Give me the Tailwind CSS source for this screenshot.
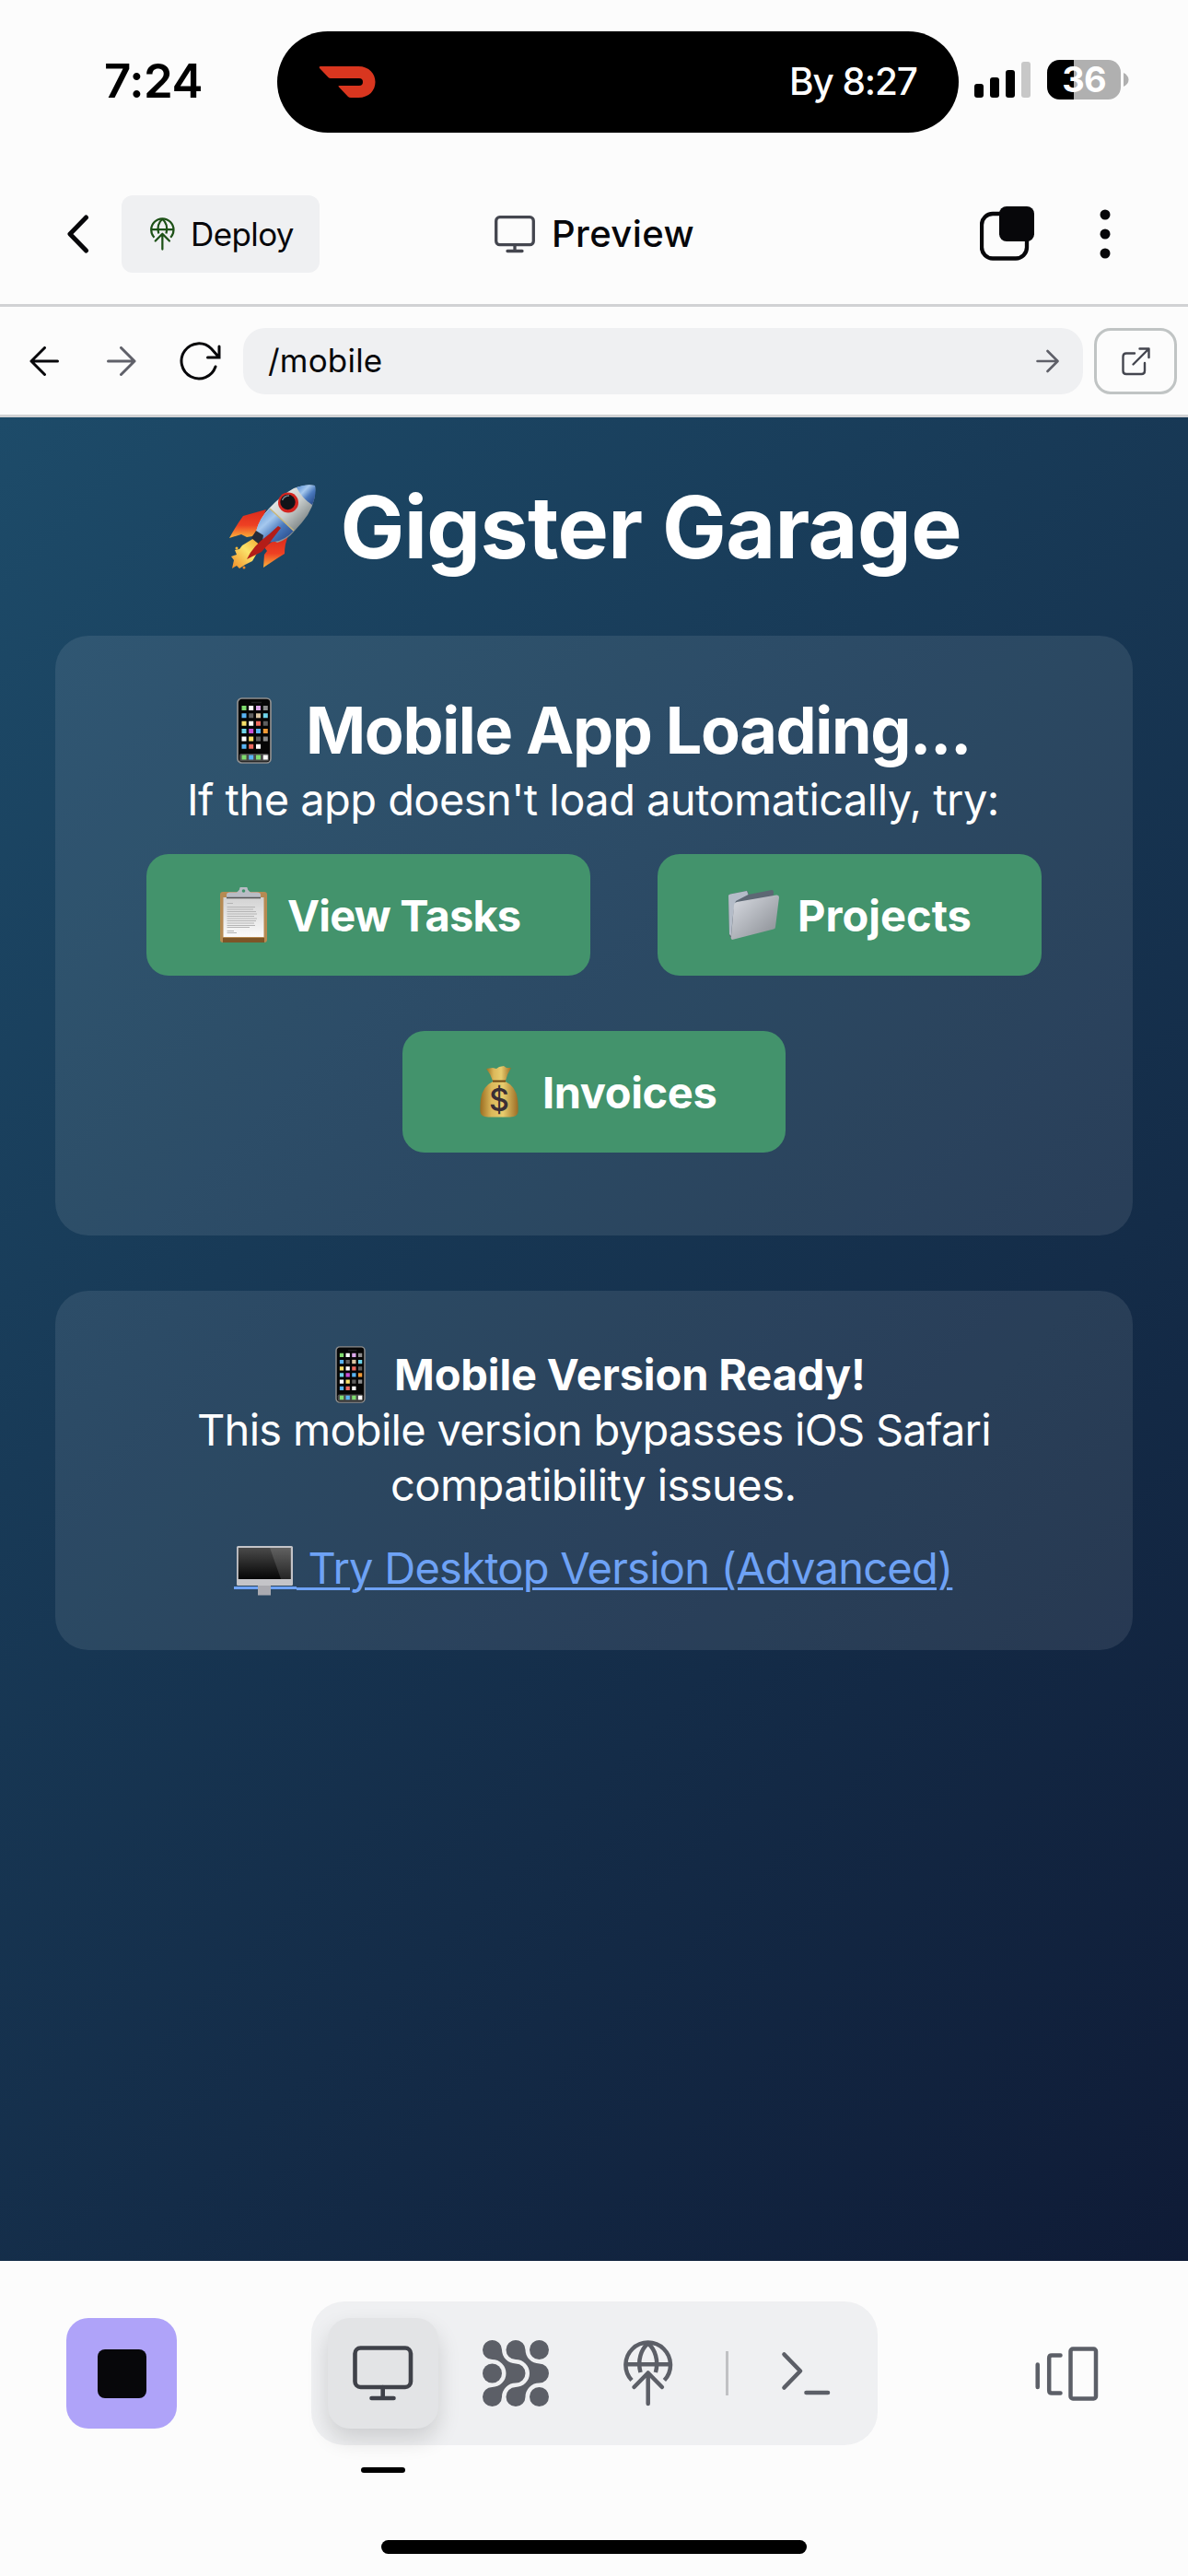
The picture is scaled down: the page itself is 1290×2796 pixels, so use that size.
<!DOCTYPE html>
<html lang="en">
<head>
<meta charset="utf-8">
<title>Preview</title>
<script src="https://cdn.jsdelivr.net/npm/@tailwindcss/browser@4"></script>
</head>
<body class="w-[1290px] h-[2796px] overflow-hidden bg-[#fcfcfc] font-['Inter',sans-serif] text-black">
<svg width="0" height="0" class="absolute">
  <defs>
    <linearGradient id="hull" x1="0" y1="0" x2="1" y2="1"><stop offset="0.2" stop-color="#eef0f0"/><stop offset=".5" stop-color="#c9cecd"/><stop offset=".8" stop-color="#6f7778"/></linearGradient>
    <linearGradient id="blue" x1="0" y1="0" x2="1" y2="1"><stop offset="0" stop-color="#4d86cf"/><stop offset=".35" stop-color="#a5c8ee"/><stop offset=".6" stop-color="#4a79bd"/><stop offset="1" stop-color="#1f3f7d"/></linearGradient>
    <linearGradient id="fin" x1="0" y1="0" x2="0" y2="1"><stop offset="0" stop-color="#d9291c"/><stop offset=".55" stop-color="#ee4023"/><stop offset="1" stop-color="#f9b43a"/></linearGradient>
    <linearGradient id="flame" x1="1" y1="0" x2="0" y2="1"><stop offset="0" stop-color="#f0a32a"/><stop offset=".45" stop-color="#fbe36a"/><stop offset="1" stop-color="#f08a26"/></linearGradient>
    <linearGradient id="paper" x1="0" y1="0" x2="0" y2="1"><stop offset="0" stop-color="#d2d2d2"/><stop offset="1" stop-color="#fbfbfb"/></linearGradient>
    <linearGradient id="folder" x1="0" y1="0" x2="1" y2="1"><stop offset="0" stop-color="#dadde4"/><stop offset="1" stop-color="#868a90"/></linearGradient>
    <linearGradient id="bag" x1="0" y1="0" x2="1" y2="0"><stop offset="0" stop-color="#9a6d22"/><stop offset=".3" stop-color="#dcb85a"/><stop offset=".6" stop-color="#e8cd6e"/><stop offset="1" stop-color="#9b6c24"/></linearGradient>
    <linearGradient id="screen" x1="0" y1="0" x2="0" y2="1"><stop offset="0" stop-color="#4a4a4a"/><stop offset="1" stop-color="#050505"/></linearGradient>
    <symbol id="globe-up" viewBox="0 0 54 72">
      <g fill="none" stroke="currentColor" stroke-width="4.5">
        <path d="M9 43.5A24.3 24.3 0 1 1 44.400 43.500"/>
        <path d="M3 26.300H51M26.700 3.500C19 10 15 22 18.500 35M26.700 3.500C34.400 10 38.400 22 34.900 35"/>
        <path d="M26.700 35.500V69M11.500 51L26.700 35.500L41.900 51" stroke-linecap="round" stroke-linejoin="round"/>
      </g>
    </symbol>
    <symbol id="phone" viewBox="0 0 38 72">
      <rect x="1" y="1" width="36" height="70" rx="4.500" fill="#060606" stroke="#8f8f8f" stroke-width="1.700"/>
      <rect x="3" y="61" width="32" height="8.500" rx="2" fill="#4b4b4b"/>
      <path d="M16 5.500H27" stroke="#222" stroke-width="1.500"/>
      <path fill="#7fdc6e" d="M5.500 9h5v5h-5zM5.500 62.500h5v5h-5zM21 62.500h5v5h-5z"/>
      <path fill="#fff" d="M13.200 9h5v5h-5zM13.200 25.700h5v5h-5zM5.500 42.400h5v5h-5zM21 50.700h5v5h-5zM28.800 62.500h5v5h-5z"/>
      <path fill="#dda9ec" d="M21 9h5v5h-5z"/>
      <path fill="#8c8c8c" d="M28.800 9h5v5h-5zM28.800 42.400h5v5h-5z"/>
      <path fill="#58b4f5" d="M5.500 17.300h5v5h-5zM21 34h5v5h-5zM5.500 50.700h5v5h-5zM13.200 62.500h5v5h-5z"/>
      <path fill="#5f5f5f" d="M13.200 17.300h5v5h-5zM28.800 25.700h5v5h-5zM21 42.400h5v5h-5z"/>
      <path fill="#dcc7a4" d="M21 17.300h5v5h-5z"/>
      <path fill="#6fd5ea" d="M28.800 17.300h5v5h-5zM5.500 34h5v5h-5z"/>
      <path fill="#f8e069" d="M5.500 25.700h5v5h-5zM13.200 42.400h5v5h-5z"/>
      <path fill="#ee6a5f" d="M21 25.700h5v5h-5zM13.200 50.700h5v5h-5z"/>
      <path fill="#c951d8" d="M13.200 34h5v5h-5z"/>
      <path fill="#f29a35" d="M28.800 34h5v5h-5z"/>
    </symbol>
  </defs>
</svg>

<!-- Status bar -->
<div class="flex h-[110px] mt-[34px] items-center">
  <div class="w-[301px] pl-[113px] text-[51px] leading-[60px] tracking-[-0.5px] font-semibold -mt-[2px] whitespace-nowrap">7:24</div>
  <div class="w-[740px] h-[110px] rounded-full bg-black flex items-center pl-[45px]">
    <svg width="62" height="34" viewBox="0 0 62 34"><path d="M2 0H43C55 0 61.500 8 61.500 17S55 34 43 34H35Q33 34 32 33L22 22.500Q20.500 21 22.500 21H44Q48 21 48 17T44 13H13Q11.500 13 10.500 12L1 2Q0 0 2 0Z" fill="#d9361f"/></svg>
    <div class="ml-[449px] text-[40.5px] leading-[60px] tracking-[-1.1px] font-medium text-white whitespace-nowrap">By 8:27</div>
  </div>
  <svg class="ml-[17px] -mt-[4px]" width="61" height="44" viewBox="0 0 61 44">
    <rect x="0" y="26" width="10" height="15" rx="3"/><rect x="17" y="19" width="10" height="22" rx="3"/><rect x="34" y="11" width="10" height="30" rx="3"/><rect x="51" y="2" width="10" height="39" rx="3" fill="#c8c8c8"/>
  </svg>
  <div class="ml-[18px] -mt-[5px] w-[80px] h-[43px] rounded-[13.5px] bg-[linear-gradient(90deg,#000_29px,#b0b0b0_29px)] text-white text-[38px] leading-[43px] font-bold tracking-[-0.8px] text-center">36</div>
  <svg class="ml-[3px] -mt-[5px]" width="6" height="15" viewBox="0 0 6 15"><path d="M0 0Q5.500 3 5.500 7.500T0 15Z" fill="#b0b0b0"/></svg>
</div>

<!-- App header -->
<div class="mt-[34px] h-[155px] border-b-[3px] border-[#d1d2d4] flex items-center">
  <svg class="ml-[70px]" width="28" height="44" viewBox="0 0 28 44"><path d="M23.500 4L6 22L23.500 40" fill="none" stroke="#07070a" stroke-width="5" stroke-linecap="round" stroke-linejoin="round"/></svg>
  <div class="ml-[34px] w-[215px] h-[84px] rounded-xl bg-[#eff0f2] flex items-center pl-[31px]">
    <svg class="text-[#1d5117]" width="27" height="36"><use href="#globe-up"/></svg>
    <div class="ml-[17px] text-[35px] leading-[48px] tracking-[-0.6px] text-[#07070a] whitespace-nowrap">Deploy</div>
  </div>
  <svg class="ml-[190px]" width="44" height="41" viewBox="0 0 44 41" fill="none" stroke="#44464f" stroke-width="3.300" stroke-linecap="round"><rect x="1.700" y="1.700" width="40.600" height="30" rx="4"/><path d="M22 32V38M14 38.500H30"/></svg>
  <div class="ml-[18px] w-[159px] text-[40px] leading-[52px] tracking-[0.4px] font-medium text-[#07070a] whitespace-nowrap">Preview</div>
  <svg class="ml-[306px]" width="61" height="60" viewBox="0 0 61 60"><rect x="2" y="8" width="49" height="48.500" rx="12" fill="none" stroke="#07070a" stroke-width="4.300"/><rect x="21" y="0" width="38" height="38" rx="8" fill="#07070a"/></svg>
  <svg class="ml-[69px]" width="12" height="54" viewBox="0 0 12 54" fill="#07070a"><circle cx="6" cy="6" r="5.500"/><circle cx="6" cy="27" r="5.500"/><circle cx="6" cy="48" r="5.500"/></svg>
</div>

<!-- Address bar -->
<div class="h-[120px] border-b-[3px] border-[#d1d2d4] flex items-center pt-px">
  <svg class="ml-[32px]" width="32" height="32" viewBox="0 0 32 32" fill="none" stroke="#07070a" stroke-width="3" stroke-linecap="round" stroke-linejoin="round"><path d="M30.500 16H2M16.500 1.500L2 16L16.500 30.500"/></svg>
  <svg class="ml-[52px]" width="32" height="32" viewBox="0 0 32 32" fill="none" stroke="#5f6069" stroke-width="3" stroke-linecap="round" stroke-linejoin="round"><path d="M1.500 16H30M15.500 1.500L30 16L15.500 30.500"/></svg>
  <svg class="ml-[47px]" width="45" height="42" viewBox="0 0 45 42" fill="none" stroke="#07070a" stroke-width="3" stroke-linecap="round"><path d="M39 27A19 19 0 1 1 34.500 7.500L42.500 16.500M43 5V17H30.500"/></svg>
  <div class="ml-[24px] w-[912px] h-[72px] rounded-[24px] bg-[#eff0f2] flex items-center justify-between pl-[27px] pr-[26px]">
    <div class="-mt-[2px] text-[35px] leading-[48px] tracking-[0.2px] text-[#07070a] whitespace-nowrap">/mobile</div>
    <svg width="25" height="26" viewBox="0 0 25 26" fill="none" stroke="#5f6069" stroke-width="2.600" stroke-linecap="round" stroke-linejoin="round"><path d="M1.500 13H23M12.500 2L23.500 13L12.500 24"/></svg>
  </div>
  <div class="ml-[12px] w-[90px] h-[72px] rounded-[18px] border-[3px] border-[#c0c4c4] flex items-center justify-center">
    <svg width="31" height="31" viewBox="0 0 31 31" fill="none" stroke="#44464f" stroke-width="2.400" stroke-linecap="round" stroke-linejoin="round"><path d="M14 6.500H5Q1.500 6.500 1.500 10V25.500Q1.500 29 5 29H21.500Q25 29 25 25.500V17M19.500 1.500H29.500V11M29 2L12.500 18.500"/></svg>
  </div>
</div>

<!-- Previewed page -->
<main class="h-[2001px] bg-[linear-gradient(135deg,#1d4b69,#0f1b36)] px-[60px] pt-[59px] text-white">
  <h1 class="flex items-center justify-center h-[120px] text-[93px] leading-[120px] tracking-[-0.6px] font-bold whitespace-nowrap">
    <svg width="95" height="92" viewBox="0 0 95 92">
      <path d="M28 58L36 66L26 83L18 87L12 91L9 88L4 91L6 82L3 78L9 76L7 71L12 70L15 66Z" fill="url(#flame)"/>
      <circle cx="9" cy="69" r="1.500" fill="#f6b637"/><circle cx="17" cy="90" r="1.500" fill="#f08a26"/>
      <path d="M41 27L31 51L26 56L20 57L14 54L1 58Q8 45 16 34Z" fill="url(#fin)"/>
      <path d="M65 56Q61 64 61 75L53 80L38 90L39 76L42 72L39 68L50 60Z" fill="url(#fin)"/>
      <path d="M94 1Q96 22 80 41L72 50Q64 60 53 63L30 51Q34 36 44 26Q58 11 71 4Q84 -1 94 1Z" fill="url(#hull)"/>
      <path d="M45 26L71 50Q62 60 50 62L38 63L30 51Q33 37 45 26Z" fill="url(#blue)"/>
      <path d="M45 26L71 50" stroke="#c9b77a" stroke-width="1.500"/>
      <path d="M94 1Q96 11 91 22Q80 15 74 3Q84 -1 94 1Z" fill="url(#blue)"/>
      <path d="M30 50L38 55L36 67L25 58Z" fill="#252b38"/>
      <path d="M54 45L57 47L44 64L36 73L20 81Q26 67 44 54Z" fill="#b31d18"/>
      <circle cx="65" cy="19.500" r="11" fill="#d3241f"/><circle cx="64.500" cy="19" r="8.200" fill="#111318"/>
      <path d="M58.500 17Q60.500 12 66 12" stroke="#77808a" stroke-width="1.500" fill="none"/>
    </svg>
    <span class="ml-[27px] w-[673px]">Gigster Garage</span>
  </h1>

  <section class="mt-[58px] h-[651px] rounded-[36px] bg-white/9 pt-[61px]">
    <h2 class="flex items-center h-[84px] pl-[197px] text-[70px] leading-[84px] tracking-[-1.35px] font-bold whitespace-nowrap">
      <svg width="38" height="72"><use href="#phone"/></svg>
      <span class="ml-[37px]">Mobile App Loading...</span>
    </h2>
    <p class="mt-[3px] pl-[143px] h-[60px] text-[47px] leading-[60px] tracking-[-0.55px] whitespace-nowrap">If the app doesn't load automatically, try:</p>
    <div class="mt-[29px] flex flex-wrap justify-center gap-x-[73px] gap-y-[60px] text-[47px] leading-[60px] tracking-[-0.4px] font-bold whitespace-nowrap">
      <div class="w-[482px] h-[132px] rounded-[24px] bg-[#43936c] flex items-center pl-[79px]">
        <svg width="53" height="61" viewBox="0 0 53 61"><rect x="1" y="5" width="51" height="55" rx="3" fill="#b68a52"/><rect x="4" y="55" width="45" height="5" fill="#7d5527"/><rect x="4.500" y="11" width="44" height="43" fill="url(#paper)"/><g stroke="#b4b4b4" stroke-width="1"><path d="M8.500 17.500H15M8.500 21.500H39M8.500 24H37M8.500 26.500H40M8.500 29H41M8.500 31.500H38M8.500 34H41M8.500 36.500H40M8.500 39H38M8.500 41.500H39M8.500 43.500H33M8.500 47.500H16M8.500 49.500H19"/></g><path d="M8 11.500V8Q8 5.500 12 5.500H19Q21 4 22 2.500A4.500 4.500 0 0 1 31 2.500Q32 4 34 5.500H41Q45 5.500 45 8V11.500Z" fill="#b9bcc4"/><path d="M8 11.500H45" stroke="#555" stroke-width="1.500"/><circle cx="26.500" cy="4" r="1.800" fill="#43936c"/></svg>
        <span class="ml-[21px] mt-[2px] tracking-[-0.8px]">View Tasks</span>
      </div>
      <div class="w-[417px] h-[132px] rounded-[24px] bg-[#43936c] flex items-center pl-[77px]">
        <svg width="55" height="54" viewBox="0 0 55 54"><path d="M0 6Q0 5 2 4.500L20 1Q21 1 21.500 3V5L47 0Q49 0 49 3L44 40L4 53Q1 51 1 48Z" fill="#5d6874"/><path d="M0 6Q0 5 2 4.500L20 1L21.500 5L8 12Q5 20 3 50L1 48Z" fill="#b4bcc8"/><path d="M6 17Q6 14 9 13L52 5.500Q55 5 55 8L51 40Q51 42 49 42.500L4 54Q2 53 3 50Z" fill="url(#folder)"/></svg>
        <span class="ml-[20px] mt-[2px] tracking-[0px]">Projects</span>
      </div>
      <div class="w-[416px] h-[132px] rounded-[24px] bg-[#43936c] flex items-center pl-[84px]">
        <svg width="42" height="56" viewBox="0 0 42 56"><path d="M7 3L14 2L18 3L21 1L26 0L29 2L34 2Q30 8 28 16H14Q12 9 7 3Z" fill="url(#bag)"/><path d="M14 17H28Q39 22 41 36Q42 45 41.500 50Q41 55 33 55.500H9Q1 55 .5 50Q0 45 1 36Q3 22 14 17Z" fill="url(#bag)"/><path d="M14 16.500H28" stroke="#6d4816" stroke-width="2"/><text x="21" y="49" text-anchor="middle" font-size="34" font-weight="500" letter-spacing="0" fill="#3a2f35">$</text></svg>
        <span class="ml-[26px] mt-[2px]">Invoices</span>
      </div>
    </div>
  </section>

  <section class="mt-[60px] h-[390px] rounded-[36px] bg-white/9 pt-[61px] text-[47px] leading-[60px] whitespace-nowrap">
    <div class="flex items-center h-[60px] pl-[304px] font-bold tracking-[-0.15px]">
      <svg width="33" height="62"><use href="#phone"/></svg>
      <span class="ml-[31px]">Mobile Version Ready!</span>
    </div>
    <p class="pl-[154px] tracking-[-0.72px]">This mobile version bypasses iOS Safari</p>
    <p class="pl-[364px] tracking-[-0.55px]">compatibility issues.</p>
    <p class="mt-[30px] h-[60px] pl-[194px] tracking-[-0.75px]"><a class="underline decoration-[3px] underline-offset-[4px] text-[#6ea2f5]"><svg class="inline align-[-13px]" width="68" height="54" viewBox="0 0 68 54"><path d="M0 45.500H68" stroke="currentColor" stroke-width="3"/><path d="M26 42H40V53.500H26Z" fill="#aaaab0"/><rect x="3" width="61" height="43" rx="1.500" fill="#c4c4c8"/><rect x="4.800" y="2" width="57" height="34" fill="url(#screen)"/><path d="M39 2H61.800V36H51Z" fill="#fff" opacity=".13"/></svg> Try Desktop Version (Advanced)</a></p>
  </section>
</main>

<!-- Bottom toolbar -->
<footer class="pt-[44px]">
  <div class="flex items-center h-[156px]">
    <div class="ml-[72px] w-[120px] h-[120px] rounded-[24px] bg-[#afa3f9] flex items-center justify-center"><div class="w-[53px] h-[53px] rounded-[8px] bg-[#07070a]"></div></div>
    <div class="ml-[146px] w-[615px] h-[156px] rounded-[36px] bg-[#eff0f2] flex items-center pl-[18px] text-[#5c5f67]">
      <div class="w-[120px] h-[120px] rounded-[24px] bg-[#e3e4e6] shadow-[0_12px_24px_rgba(0,0,0,0.14)] flex items-center justify-center">
        <svg width="66" height="60" viewBox="0 0 66 60" fill="none" stroke="#3f4149" stroke-width="4.600" stroke-linecap="round"><rect x="2.500" y="2.500" width="60.500" height="42.500" rx="6"/><path d="M32.700 45V57M20.500 57H44.500"/></svg>
      </div>
      <svg class="ml-[48px]" width="72" height="72" viewBox="0 0 72 72" fill="currentColor">
        <circle cx="61.500" cy="10.500" r="10.500"/><circle cx="10.500" cy="36" r="10.500"/><circle cx="61.500" cy="61.500" r="10.500"/>
        <path id="wave" d="M21 10.500A10.500 10.500 0 1 0 10.500 21A15 15 0 0 1 10.500 51A10.500 10.500 0 1 0 21 61.500A15 15 0 0 1 36 46.500A10.500 10.500 0 0 0 36 25.500A15 15 0 0 1 21 10.500Z"/>
        <use href="#wave" x="25.500"/>
      </svg>
      <svg class="ml-[81px]" width="54" height="72"><use href="#globe-up"/></svg>
      <div class="ml-[57px] w-[3px] h-[48px] bg-[#c0c1c4]"></div>
      <svg class="ml-[57px]" width="54" height="50" viewBox="0 0 54 50" fill="none" stroke="currentColor" stroke-width="4.600" stroke-linecap="round" stroke-linejoin="round"><path d="M3.500 4.500L21 22.500L3.500 40.500M27.500 46H51"/></svg>
    </div>
    <svg class="ml-[171px]" width="69" height="59" viewBox="0 0 69 59" fill="none" stroke="#5c5f67" stroke-width="4.500" stroke-linecap="round"><path d="M2.700 19.500V44M27.500 9.500H18Q15.200 9.500 15.200 12.500V47.500Q15.200 50.500 18 50.500H27.500"/><rect x="38.500" y="2.500" width="27.500" height="54" rx="2.500"/></svg>
  </div>
  <div class="ml-[392px] mt-[24px] w-[48px] h-[6px] rounded-[3px] bg-black"></div>
  <div class="ml-[414px] mt-[73px] w-[462px] h-[15px] rounded-full bg-black"></div>
</footer>
</body>
</html>
